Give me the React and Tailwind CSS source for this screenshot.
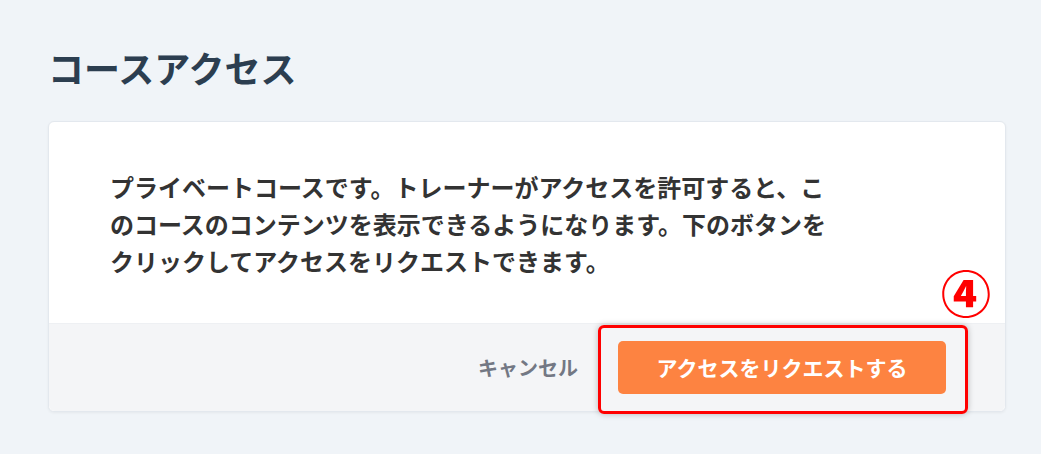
export default function App() {
  return (
    <div
      className="min-h-screen w-full bg-[#f0f4f8] px-12 pt-10"
      style={{ fontFamily: '"Noto Sans CJK JP", "Noto Sans", sans-serif' }}
    >
      <h1 className="text-[36px] font-bold leading-[54px] text-[#2c3e50]">コースアクセス</h1>

      <div className="mt-[27px] w-[958px] rounded-md border border-[#e3e8ee] bg-white shadow-[0_1px_3px_rgba(0,0,0,0.05)]">
        <div className="pl-[61px] pt-[46px] pb-[44px]">
          <p className="w-[730px] text-[24px] font-bold leading-[37px] text-[#333333]">
            プライベートコースです。トレーナーがアクセスを許可すると、このコースのコンテンツを表示できるようになります。下のボタンをクリックしてアクセスをリクエストできます。
          </p>
        </div>

        <div className="flex items-center justify-end gap-10 rounded-b-md border-t border-[#eef0f3] bg-[#f4f5f7] pr-[59px] py-[17px]">
          <button className="text-[20px] font-bold leading-[30px] text-[#737884]">キャンセル</button>
          <div className="relative">
            <button className="h-[53px] w-[328px] rounded-[5px] bg-[#fd8341] text-[21px] font-bold text-white">
              アクセスをリクエストする
            </button>
            <div className="pointer-events-none absolute -left-5 -right-[22px] -top-4 -bottom-5 rounded-md border-[3px] border-[#ff0000] shadow-[0_0_6px_rgba(0,0,0,0.25)]" />
            <span className="pointer-events-none absolute -right-[50px] -top-[80px] flex h-[60px] w-[60px] items-center justify-center text-[50px] font-black leading-none text-[#ff0000]">
              ④
            </span>
          </div>
        </div>
      </div>
    </div>
  );
}
